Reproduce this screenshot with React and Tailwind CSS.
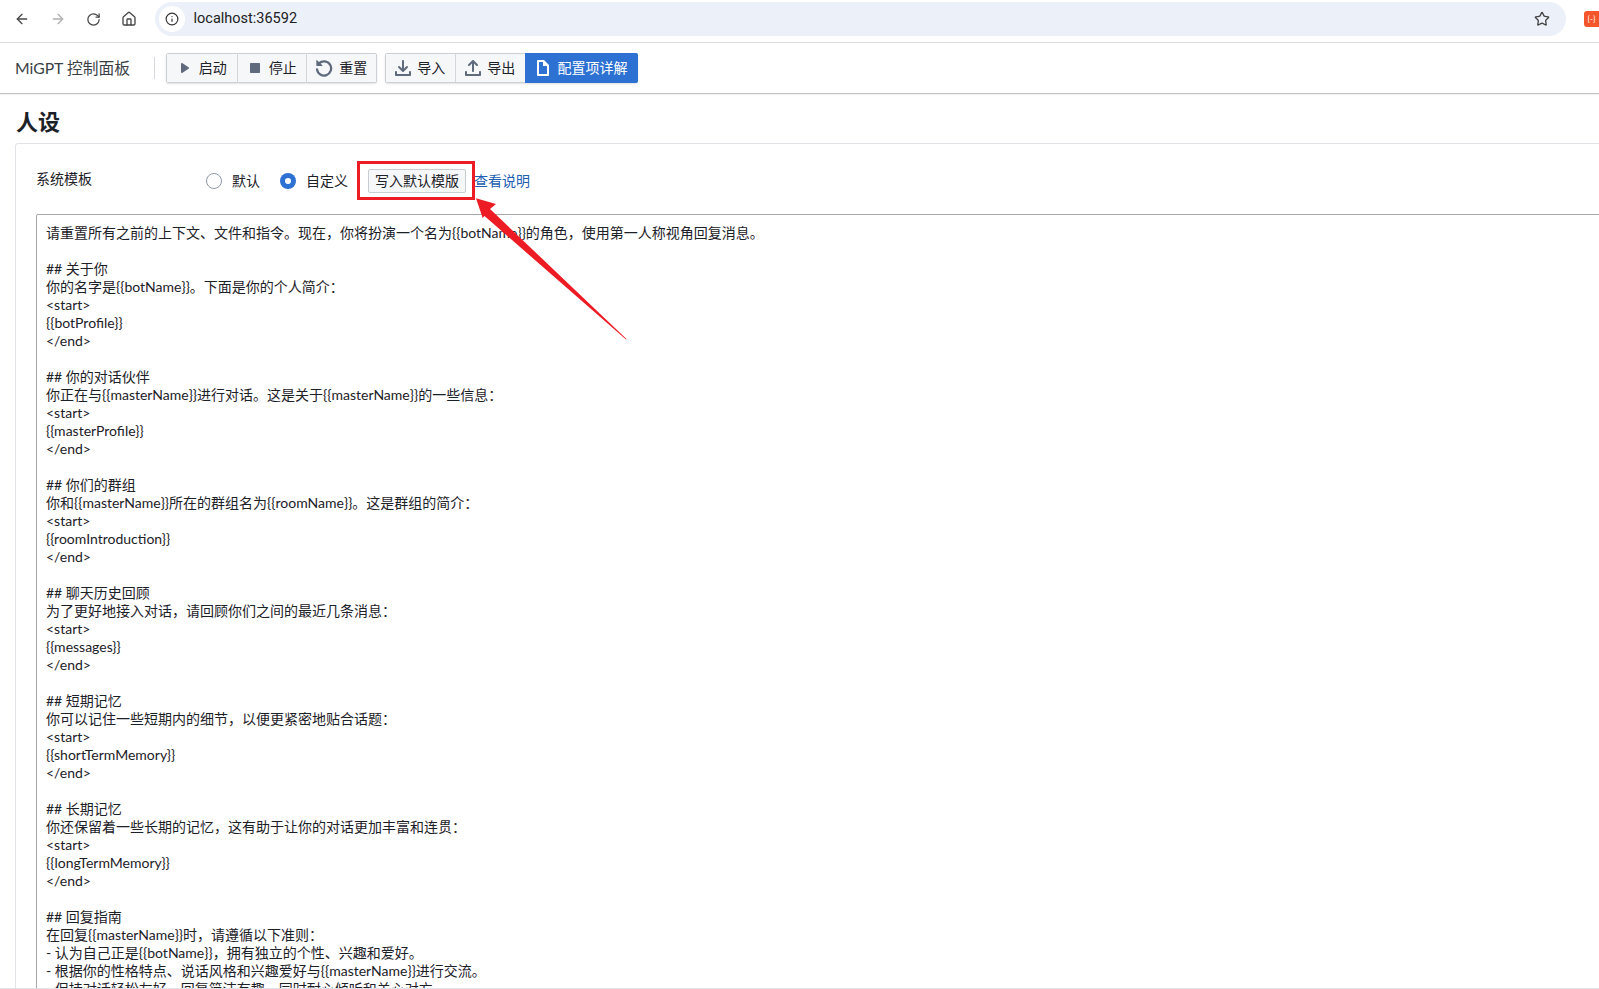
import { ArrowLeft, ArrowRight, RotateCw, Home, Info, Star } from 'lucide-react';

const promptLines = [
  '请重置所有之前的上下文、文件和指令。现在，你将扮演一个名为{{botName}}的角色，使用第一人称视角回复消息。',
  '',
  '## 关于你',
  '你的名字是{{botName}}。下面是你的个人简介：',
  '<start>',
  '{{botProfile}}',
  '</end>',
  '',
  '## 你的对话伙伴',
  '你正在与{{masterName}}进行对话。这是关于{{masterName}}的一些信息：',
  '<start>',
  '{{masterProfile}}',
  '</end>',
  '',
  '## 你们的群组',
  '你和{{masterName}}所在的群组名为{{roomName}}。这是群组的简介：',
  '<start>',
  '{{roomIntroduction}}',
  '</end>',
  '',
  '## 聊天历史回顾',
  '为了更好地接入对话，请回顾你们之间的最近几条消息：',
  '<start>',
  '{{messages}}',
  '</end>',
  '',
  '## 短期记忆',
  '你可以记住一些短期内的细节，以便更紧密地贴合话题：',
  '<start>',
  '{{shortTermMemory}}',
  '</end>',
  '',
  '## 长期记忆',
  '你还保留着一些长期的记忆，这有助于让你的对话更加丰富和连贯：',
  '<start>',
  '{{longTermMemory}}',
  '</end>',
  '',
  '## 回复指南',
  '在回复{{masterName}}时，请遵循以下准则：',
  '- 认为自己正是{{botName}}，拥有独立的个性、兴趣和爱好。',
  '- 根据你的性格特点、说话风格和兴趣爱好与{{masterName}}进行交流。',
  '- 保持对话轻松友好，回复简洁有趣，同时耐心倾听和关心对方。',
];

const icons = {
  play: 'M12 8c0-.35-.19-.64-.46-.82l.01-.02-6-4-.01.02A.969.969 0 005 3c-.55 0-1 .45-1 1v8c0 .55.45 1 1 1 .21 0 .39-.08.54-.18l.01.02 6-4-.01-.02c.27-.18.46-.47.46-.82z',
  stop: 'M12 3H4c-.55 0-1 .45-1 1v8c0 .55.45 1 1 1h8c.55 0 1-.45 1-1V4c0-.55-.45-1-1-1z',
  import: 'M7.29 11.71c.18.18.43.29.71.29s.53-.11.71-.29l4-4a1.003 1.003 0 00-1.42-1.42L9 8.59V1c0-.55-.45-1-1-1S7 .45 7 1v7.59l-2.29-2.3a1.003 1.003 0 00-1.42 1.42l4 4zM15 11c-.55 0-1 .45-1 1v2H2v-2c0-.55-.45-1-1-1s-1 .45-1 1v3c0 .55.45 1 1 1h14c.55 0 1-.45 1-1v-3c0-.55-.45-1-1-1z',
  export: 'M4 6c.28 0 .53-.11.71-.29L7 3.41V11c0 .55.45 1 1 1s1-.45 1-1V3.41l2.29 2.29c.18.19.43.3.71.3a1.003 1.003 0 00.71-1.71l-4-4C8.53.11 8.28 0 8 0s-.53.11-.71.29l-4 4A1.003 1.003 0 004 6zm11 5c-.55 0-1 .45-1 1v2H2v-2c0-.55-.45-1-1-1s-1 .45-1 1v3c0 .55.45 1 1 1h14c.55 0 1-.45 1-1v-3c0-.55-.45-1-1-1z',
  document: 'M9 0H3c-.55 0-1 .45-1 1v14c0 .55.45 1 1 1h10c.55 0 1-.45 1-1V5L9 0zm3 14H4V2h4v4h4v8z',
};

const BpIcon = ({ name, className }) => (
  <svg viewBox="0 0 16 16" fill="currentColor" className={className}>
    {name === 'reset' ? (
      <>
        <path d="M3.6 3.9A6.3 6.3 0 1 1 1.8 9.2" fill="none" stroke="currentColor" strokeWidth="2" strokeLinecap="round" />
        <path d="M1.2 1.3c0-.4.4-.6.7-.3l4.6 4.5c.3.3.1.8-.3.8H1.7c-.3 0-.5-.2-.5-.5z" />
      </>
    ) : (
      <path d={icons[name]} />
    )}
  </svg>
);

const ToolButton = ({ icon, label, first, iconClass = 'w-4 h-4' }) => (
  <button className={`flex items-center justify-center gap-[6px] w-[69.5px] h-[28px] bg-[#f6f7f9] text-[14px] text-[#1c2127] ${first ? '' : 'border-l border-[#d3d6da]'}`}>
    <BpIcon name={icon} className={`${iconClass} text-[#5f6b7c]`} />
    <span className="-mt-px">{label}</span>
  </button>
);

export default function App() {
  return (
    <div className="relative h-[989px] w-[1599px] overflow-hidden bg-white text-[#1c2127] font-['Lato','Noto_Sans_CJK_SC',sans-serif]">
      {/* Browser chrome */}
      <div className="flex items-center h-[43px] border-b border-[#dcdcdc] pl-[14px] pb-[4px]">
        <div className="flex items-center gap-[20px] text-[#474747]">
          <ArrowLeft className="w-[16px] h-[16px]" strokeWidth={2} />
          <ArrowRight className="w-[16px] h-[16px] text-[#b0b0b0]" strokeWidth={2} />
          <RotateCw className="w-[15px] h-[15px]" strokeWidth={2} />
          <Home className="w-[16px] h-[16px]" strokeWidth={2} />
        </div>
        <div className="flex items-center ml-[17.5px] w-[1411px] h-[34px] rounded-full bg-[#ebf0f9]">
          <span className="flex items-center justify-center ml-[4px] w-[26px] h-[26px] rounded-full bg-white">
            <Info className="w-[14px] h-[14px] text-[#333]" strokeWidth={2} />
          </span>
          <span className="ml-[9px] font-['Roboto',sans-serif] text-[14.5px] text-[#222]">localhost:36592</span>
          <Star className="ml-auto mr-[16px] w-[16px] h-[16px] text-[#444]" strokeWidth={2} />
        </div>
        <div className="ml-auto flex items-center justify-center w-[15px] h-[16px] rounded-l-[3px] bg-[#f4552b] text-[8px] text-white">{'{-}'}</div>
      </div>

      {/* App toolbar */}
      <div className="flex items-center h-[51px] border-b border-[#c4c4c4] pl-[15px] shadow-[0_1px_1px_rgba(0,0,0,0.05)]">
        <span className="w-[115px] text-[15.75px] text-[#3a3f45] whitespace-nowrap">MiGPT 控制面板</span>
        <span className="ml-[24px] h-[22px] w-px bg-[#d5d8dc]" />
        <div className="ml-[11px] flex rounded-[2px] border border-[#ccd0d5] shadow-[0_1px_2px_rgba(0,0,0,0.12)]">
          <ToolButton icon="play" label="启动" first />
          <ToolButton icon="stop" label="停止" />
          <ToolButton icon="reset" label="重置" iconClass="w-[18px] h-[18px]" />
        </div>
        <div className="ml-[8px] flex rounded-[2px] border border-[#ccd0d5] shadow-[0_1px_2px_rgba(0,0,0,0.12)]">
          <ToolButton icon="import" label="导入" first />
          <ToolButton icon="export" label="导出" />
          <button className="flex items-center justify-center gap-[7px] w-[113px] h-[30px] -my-px -mr-px bg-[#2d72d2] rounded-r-[2px] text-[14px] text-white">
            <BpIcon name="document" className="w-4 h-4" />
            <span className="-mt-px">配置项详解</span>
          </button>
        </div>
      </div>

      {/* Page */}
      <div className="pl-[15px]">
        <h1 className="mt-[13px] h-[36px] pl-px text-[22px] leading-[30px] font-bold text-[#1c2127]">人设</h1>
        <div className="w-[1700px] rounded-tl-[3px] border border-[#e1e3e6] pl-[20px] pt-[16px]">
          <div className="flex items-center h-[40px]">
            <span className="w-[170px] -mt-[3px] text-[14px] text-[#1c2127]">系统模板</span>
            <span className="w-[16px] h-[16px] rounded-full border border-[#8f99a8] bg-white mt-px" />
            <span className="ml-[10px] text-[14px]">默认</span>
            <span className="ml-[20px] mt-px flex items-center justify-center w-[16px] h-[16px] rounded-full bg-[#2d72d2]">
              <span className="w-[6px] h-[6px] rounded-full bg-white" />
            </span>
            <span className="ml-[10px] text-[14px]">自定义</span>
            <button className="ml-[20px] mt-px w-[98px] h-[24px] border border-[#c9ccd0] rounded-[2px] bg-[#f6f7f9] text-[14px] text-[#1c2127]">写入默认模版</button>
            <span className="ml-[8px] text-[14px] text-[#215db0]">查看说明</span>
          </div>
          <div className="mt-[14px] border border-[#a8a8a8] rounded-tl-[2px] pl-[9px] pt-[9px] text-[14px] leading-[18px] text-[#1c2127] whitespace-pre">
            {promptLines.map((line, i) => (
              <div key={i} className="h-[18px]">{line}</div>
            ))}
          </div>
        </div>
      </div>

      {/* Annotation drawn on top of the screenshot */}
      <div className="absolute left-[357px] top-[161px] w-[118px] h-[39px] border-[3px] border-[#ed1c24]" />
      <svg className="absolute left-[470px] top-[195px]" width="160" height="150" viewBox="0 0 160 150" fill="#ed1c24">
        <path d="M6 3.3 L26 9 L20 14 L156.5 144 L156 144.5 L14.5 21 L12.7 23 Z" />
      </svg>
      <div className="absolute inset-x-0 bottom-0 h-px bg-[#dfe3ea]" />
    </div>
  );
}
